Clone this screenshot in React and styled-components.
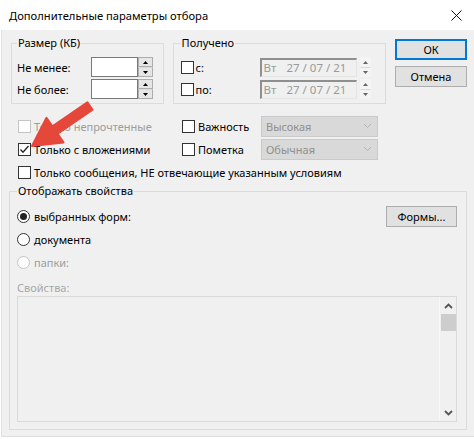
import React from "react";
import styled, { createGlobalStyle } from "styled-components";

const GlobalStyle = createGlobalStyle`
  body {
    margin: 0;
    background: #fff;
    font-family: "Noto Sans", "Open Sans", sans-serif;
    font-size: 11px;
    color: #000;
  }
`;

const Window = styled.div`
  position: relative;
  width: 474px;
  height: 439px;
  overflow: hidden;
  background: #fff;
`;

const TitleBar = styled.div`
  height: 30px;
  display: flex;
  align-items: center;
  justify-content: space-between;
  padding: 0 12px 0 9px;
  box-sizing: border-box;
  background: #fff;
  font-size: 11.2px;
`;

const Dialog = styled.div`
  background: #f0f0f0;
  margin-left: 1px;
  border-left: 1px solid #e2e2e2;
  border-bottom: 1px solid #dedede;
  padding: 5px 7px 6px 7px;
`;

const TopArea = styled.div`
  display: flex;
  align-items: flex-start;
`;

const Group = styled.fieldset`
  margin: 0 ${({ $gapRight }) => $gapRight || 0}px 0 ${({ $gapLeft }) => $gapLeft || 0}px;
  padding: 6px ${({ $padRight }) => $padRight || 5}px ${({ $padBottom }) => $padBottom || 4}px ${({ $padLeft }) => $padLeft || 5}px;
  border: 1px solid #dcdcdc;
  width: ${({ $width }) => ($width ? `${$width}px` : "auto")};
  box-sizing: border-box;
  min-width: 0;
`;

const Legend = styled.legend`
  padding: 0 1px;
  line-height: 16px;
  font-size: 11px;
`;

const FieldRow = styled.div`
  display: flex;
  align-items: center;
  height: 20px;
  & + & {
    margin-top: 2px;
  }
`;

const FieldLabel = styled.span`
  width: ${({ $width }) => $width}px;
  flex: none;
`;

const TextBox = styled.div`
  width: 47px;
  height: 20px;
  box-sizing: border-box;
  border: 1px solid #7a7a7a;
  background: #fff;
`;

const Spin = styled.div`
  width: ${({ $width }) => $width || 15}px;
  height: 20px;
  display: flex;
  flex-direction: column;
  margin-left: ${({ $gap }) => $gap || 0}px;
  box-sizing: border-box;
`;

const SpinHalf = styled.div`
  flex: 1;
  display: flex;
  align-items: center;
  justify-content: center;
  background: ${({ $flat }) => ($flat ? "#f4f4f4" : "#e6e6e6")};
  border: 1px solid ${({ $flat }) => ($flat ? "#f4f4f4" : "#adadad")};
  & + & {
    border-top: 1px solid ${({ $flat }) => ($flat ? "#dadada" : "#adadad")};
  }
`;

const Tri = ({ down, color = "#000" }) => (
  <svg width="5" height="3" viewBox="0 0 5 3">
    <polygon points={down ? "0,0 5,0 2.5,3" : "0,3 5,3 2.5,0"} fill={color} />
  </svg>
);

const Check = styled.span`
  width: 13px;
  height: 13px;
  box-sizing: border-box;
  flex: none;
  border: 1px solid ${({ $disabled }) => ($disabled ? "#c4c4c4" : "#333")};
  background: #fff;
  display: flex;
  align-items: center;
  justify-content: center;
`;

const CheckBox = ({ checked, disabled }) => (
  <Check $disabled={disabled}>
    {checked && (
      <svg width="11" height="11" viewBox="0 0 11 11">
        <polyline points="1.5,5.5 4,8.2 9.5,2" fill="none" stroke="#222" strokeWidth="1.3" />
      </svg>
    )}
  </Check>
);

const CheckLine = styled.label`
  display: flex;
  align-items: center;
  gap: ${({ $gap }) => ($gap === undefined ? 3 : $gap)}px;
  width: ${({ $width }) => ($width ? `${$width}px` : "auto")};
  color: ${({ $disabled }) => ($disabled ? "#9d9d9d" : "#000")};
  white-space: nowrap;
`;

const DateBox = styled.div`
  width: 97px;
  height: 19px;
  box-sizing: border-box;
  border-top: 2px solid #8f8f8f;
  border-left: 2px solid #8f8f8f;
  border-right: 1px solid #e4e4e4;
  border-bottom: 1px solid #e4e4e4;
  display: flex;
  align-items: center;
  padding-left: 2px;
  color: #9a9a9a;
  gap: 10px;
  font-size: 11.5px;
`;

const ButtonCol = styled.div`
  display: flex;
  flex-direction: column;
  gap: 6px;
  margin-top: 4px;
`;

const Button = styled.div`
  width: ${({ $width }) => $width || 72}px;
  height: 21px;
  box-sizing: border-box;
  background: #e1e1e1;
  border: ${({ $default }) => ($default ? "2px solid #0078d7" : "1px solid #adadad")};
  display: flex;
  align-items: center;
  justify-content: center;
  color: #000;
`;

const Options = styled.div`
  display: grid;
  grid-template-columns: 164px 79px 117px;
  grid-auto-rows: 22px;
  row-gap: 1px;
  align-items: center;
  margin: 11px 0 0 9px;
`;

const Wide = styled.div`
  grid-column: 1 / -1;
`;

const Combo = styled.div`
  height: 21px;
  box-sizing: border-box;
  background: #d9d9d9;
  border: 1px solid #cacaca;
  display: flex;
  align-items: center;
  justify-content: space-between;
  padding: 0 5px 0 4px;
  color: #8f8f8f;
`;

const RadioRow = styled.div`
  display: flex;
  align-items: center;
  justify-content: space-between;
  height: 23px;
`;

const RadioDot = styled.span`
  width: 13px;
  height: 13px;
  box-sizing: border-box;
  border-radius: 50%;
  border: 1px solid ${({ $disabled }) => ($disabled ? "#c4c4c4" : "#333")};
  background: #fff;
  display: flex;
  align-items: center;
  justify-content: center;
  flex: none;
  &::after {
    content: "";
    display: ${({ $on }) => ($on ? "block" : "none")};
    width: 7px;
    height: 7px;
    border-radius: 50%;
    background: #222;
  }
`;

const PropsLabel = styled.div`
  margin-top: 6px;
  line-height: 16px;
  color: #a8a8a8;
`;

const ListBox = styled.div`
  height: 126px;
  box-sizing: border-box;
  border: 1px solid #dadada;
  background: #f0f0f0;
  display: flex;
  justify-content: flex-end;
`;

const ScrollBar = styled.div`
  width: 17px;
  border-left: 1px solid #f8f8f8;
  display: flex;
  flex-direction: column;
  align-items: center;
  padding: 0 1px;
  box-sizing: border-box;
`;

const ScrollArrow = styled.div`
  height: 17px;
  display: flex;
  align-items: center;
  justify-content: center;
`;

const Thumb = styled.div`
  width: 15px;
  height: 17px;
  background: #cdcdcd;
`;

const Track = styled.div`
  flex: 1;
`;

const ArrowOverlay = styled.svg`
  position: absolute;
  left: 0;
  top: 0;
  pointer-events: none;
`;

const Chevron = ({ down, color = "#555", weight = 1.8 }) => (
  <svg width="9" height="6" viewBox="0 0 9 6">
    <polyline
      points={down ? "1,1 4.5,4.5 8,1" : "1,5 4.5,1.5 8,5"}
      fill="none"
      stroke={color}
      strokeWidth={weight}
    />
  </svg>
);

const NumberField = ({ label }) => (
  <FieldRow>
    <FieldLabel $width={74}>{label}</FieldLabel>
    <TextBox />
    <Spin>
      <SpinHalf><Tri /></SpinHalf>
      <SpinHalf><Tri down /></SpinHalf>
    </Spin>
  </FieldRow>
);

const DateField = ({ label }) => (
  <FieldRow>
    <CheckLine $width={79} $gap={2}>
      <CheckBox />
      {label}
    </CheckLine>
    <DateBox>
      <span>Вт</span>
      <span>27 / 07 / 21</span>
    </DateBox>
    <Spin $gap={3} $width={11}>
      <SpinHalf $flat><Tri color="#666" /></SpinHalf>
      <SpinHalf $flat><Tri down color="#666" /></SpinHalf>
    </Spin>
  </FieldRow>
);

export default function App() {
  return (
    <Window>
      <GlobalStyle />
      <TitleBar>
        <span>Дополнительные параметры отбора</span>
        <svg width="11" height="11" viewBox="0 0 11 11">
          <path d="M0.5 0.5 L10.5 10.5 M10.5 0.5 L0.5 10.5" stroke="#111" strokeWidth="1" />
        </svg>
      </TitleBar>
      <Dialog>
        <TopArea>
          <Group $width={153} $gapLeft={2} $gapRight={9}>
            <Legend>Размер (КБ)</Legend>
            <NumberField label="Не менее:" />
            <NumberField label="Не более:" />
          </Group>
          <Group $width={214} $gapRight={9} $padLeft={7}>
            <Legend>Получено</Legend>
            <DateField label="с:" />
            <DateField label="по:" />
          </Group>
          <ButtonCol>
            <Button $default>ОК</Button>
            <Button>Отмена</Button>
          </ButtonCol>
        </TopArea>

        <Options>
          <CheckLine $disabled>
            <CheckBox disabled />
            Только непрочтенные
          </CheckLine>
          <CheckLine>
            <CheckBox />
            Важность
          </CheckLine>
          <Combo>
            Высокая
            <Chevron down color="#b4b4b4" weight={1} />
          </Combo>
          <CheckLine>
            <CheckBox checked />
            Только с вложениями
          </CheckLine>
          <CheckLine>
            <CheckBox />
            Пометка
          </CheckLine>
          <Combo>
            Обычная
            <Chevron down color="#b4b4b4" weight={1} />
          </Combo>
          <Wide>
            <CheckLine>
              <CheckBox />
              Только сообщения, НЕ отвечающие указанным условиям
            </CheckLine>
          </Wide>
        </Options>

        <Group $padLeft={7} $padRight={9} $padBottom={7}>
          <Legend>Отображать свойства</Legend>
          <RadioRow>
            <CheckLine $gap={4}>
              <RadioDot $on />
              выбранных форм:
            </CheckLine>
            <Button $width={71}>Формы...</Button>
          </RadioRow>
          <RadioRow>
            <CheckLine $gap={4}>
              <RadioDot />
              документа
            </CheckLine>
          </RadioRow>
          <RadioRow>
            <CheckLine $gap={4} $disabled>
              <RadioDot $disabled />
              папки:
            </CheckLine>
          </RadioRow>
          <PropsLabel>Свойства:</PropsLabel>
          <ListBox>
            <ScrollBar>
              <ScrollArrow><Chevron /></ScrollArrow>
              <Thumb />
              <Track />
              <ScrollArrow><Chevron down /></ScrollArrow>
            </ScrollBar>
          </ListBox>
        </Group>
      </Dialog>

      <ArrowOverlay width="474" height="439" viewBox="0 0 474 439">
        <polygon
          points="92.6,109.7 57.6,133.8 63.5,142.4 32,146 46.5,117.8 52.4,126.4 87.4,102.3"
          fill="#e5473b"
          stroke="#e5473b"
          strokeWidth="2"
          strokeLinejoin="round"
        />
      </ArrowOverlay>
    </Window>
  );
}
